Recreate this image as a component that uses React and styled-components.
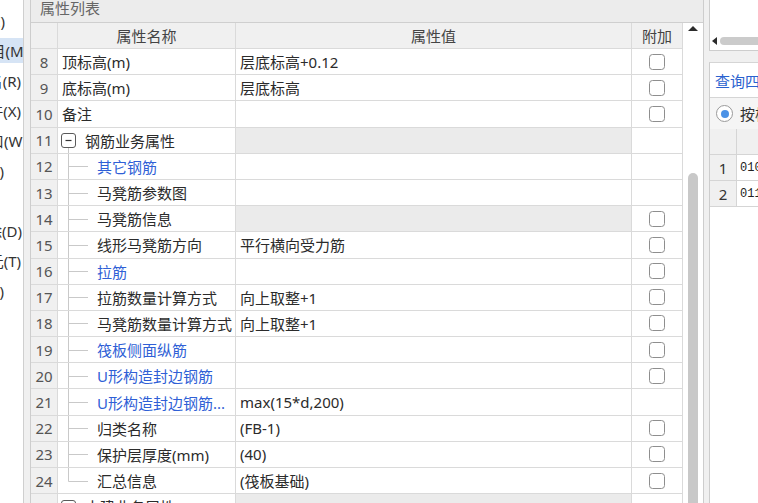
import React from 'react';
import styled, { createGlobalStyle } from 'styled-components';

const Global = createGlobalStyle`
  html, body { margin: 0; padding: 0; }
  body {
    width: 758px; height: 503px; overflow: hidden; background: #f0f0f0;
    font-family: "Noto Sans", "Noto Sans CJK SC", sans-serif;
  }
  #root { height: 503px; }
`;

const Page = styled.div`
  display: flex; width: 758px; height: 503px; overflow: hidden; background: #f0f0f0;
`;

/* ---------- left menu strip ---------- */
const MenuStrip = styled.nav`
  width: 23px; flex: none; background: #fff; border-right: 1px solid #cfcfcf;
  overflow: hidden; display: flex; flex-direction: column; gap: 5px; padding-top: 8px;
`;
const MenuItem = styled.div`
  height: 25px; flex: none; display: flex; align-items: center; justify-content: flex-end;
  background: ${p => (p.$sel ? '#d6e4f5' : 'transparent')};
  white-space: nowrap; font-size: 15px; color: #333;
`;
const MenuText = styled.span`
  margin-right: ${p => p.$end}px;
`;

/* ---------- property panel ---------- */
const Panel = styled.section`
  width: 674px; flex: none; margin-left: 6px; margin-right: 5px; box-sizing: border-box;
  display: flex; flex-direction: column; background: #fff;
  border-left: 1px solid #cdcdcd; border-right: 1px solid #cdcdcd;
`;
const PanelTitle = styled.div`
  height: 23px; flex: none; box-sizing: border-box; background: #ececec;
  border-bottom: 1px solid #cfcfcf; padding-left: 9px;
  font-size: 15px; line-height: 17px; color: #666;
`;
const PanelBody = styled.div`
  flex: 1; min-height: 0; display: flex;
`;
const Grid = styled.div`
  width: 652px; flex: none; display: flex; flex-direction: column; overflow: hidden;
`;
const GridRow = styled.div`
  display: grid; grid-template-columns: 27px 178px 396px 51px;
  height: ${p => p.$h}px; flex: none;
`;
const BaseCell = styled.div`
  box-sizing: border-box; border-right: 1px solid #dadada; border-bottom: 1px solid #dadada;
  display: flex; align-items: center; min-width: 0; overflow: hidden; white-space: nowrap;
  font-size: 15px;
`;
const HeadCell = styled(BaseCell)`
  background: #f0f0f0; color: #444; justify-content: center;
`;
const NumCell = styled(BaseCell)`
  background: #f0f0f0; color: #555; justify-content: center;
`;
const NameCell = styled(BaseCell)`
  background: #fff; color: ${p => (p.$blue ? '#2f5fd6' : '#2b2b2b')};
  padding-left: ${p => p.$pad}px;
`;
const ValueCell = styled(BaseCell)`
  background: ${p => (p.$gray ? '#ebebeb' : '#fff')}; color: #2b2b2b; padding-left: 4px;
`;
const ExtraCell = styled(BaseCell)`
  background: #fff; justify-content: center;
`;
const Check = styled.span`
  width: 16px; height: 16px; box-sizing: border-box; border: 1.5px solid #8e8e8e;
  border-radius: 3.5px; background: #fff;
`;
const GroupLabel = styled.span`
  margin-left: 9px;
`;

const VScroll = styled.div`
  width: 20px; flex: none; display: flex; flex-direction: column; align-items: center; background: #fff;
`;
const ScrollArrow = styled.svg`
  margin-top: 3px; flex: none;
`;
const VThumb = styled.div`
  width: 10px; flex: 1; margin-top: 142px; border-radius: 5px 5px 0 0; background: #c8c8c8;
`;

/* ---------- right side ---------- */
const RightCol = styled.div`
  flex: 1; min-width: 0; display: flex; flex-direction: column; overflow: hidden;
`;
const TopBox = styled.div`
  height: 51px; flex: none; box-sizing: border-box; background: #fff;
  border-left: 1px solid #cdcdcd; border-bottom: 1px solid #cdcdcd;
  display: flex; align-items: flex-end; padding: 0 0 5px 2px;
`;
const HScroll = styled.div`
  display: flex; align-items: center; gap: 3px; height: 8px; width: 300px; flex: none;
`;
const HThumb = styled.div`
  height: 8px; flex: 1; border-radius: 4px; background: #cbcbcb;
`;
const QueryBox = styled.div`
  margin-top: 11px; flex: 1; display: flex; flex-direction: column; background: #fff;
  border-left: 1px solid #cdcdcd; border-top: 1px solid #d5d5d5; width: 300px;
`;
const TabTitle = styled.div`
  height: 35px; flex: none; box-sizing: border-box; border-bottom: 1px solid #d5d5d5;
  display: flex; align-items: center; padding-left: 5px;
  font-size: 15px; color: #2a62cf; white-space: nowrap;
`;
const RadioRow = styled.div`
  height: 31px; flex: none; box-sizing: border-box; background: #f5f5f5;
  display: flex; align-items: center; gap: 7px; padding-left: 6px;
  font-size: 15px; color: #333; white-space: nowrap;
`;
const Radio = styled.span`
  width: 17px; height: 17px; box-sizing: border-box; border-radius: 50%;
  border: 1px solid #9a9a9a; background: #fff; display: flex; align-items: center; justify-content: center;
  &::after { content: ''; width: 8px; height: 8px; border-radius: 50%; background: #4b92e6; }
`;
const QRow = styled.div`
  display: grid; grid-template-columns: 27px 1fr; height: 26px; flex: none;
`;
const QNum = styled.div`
  box-sizing: border-box; background: #f0f0f0; border-right: 1px solid #d5d5d5; border-bottom: 1px solid #d5d5d5;
  display: flex; align-items: center; justify-content: center; font-size: 15px; color: #333;
`;
const QData = styled.div`
  box-sizing: border-box; background: ${p => (p.$head ? '#f0f0f0' : '#fff')};
  border-bottom: 1px solid #d5d5d5; display: flex; align-items: center; padding-left: 3px;
  font-family: "Liberation Mono", monospace; font-size: 12px; color: #222; white-space: nowrap;
`;

/* ---------- drawings ---------- */
const TreeLines = ({ last }) => (
  <svg width="39" height="26" viewBox="0 0 39 26" style={{ flex: 'none' }}>
    <path d={`M10.5 0 V${last ? 13.5 : 26} M10.5 13.5 H30`} stroke="#c9c9c9" strokeWidth="1" fill="none" />
  </svg>
);

const Expander = ({ line }) => (
  <svg width="18" height="26" viewBox="0 0 18 26" style={{ flex: 'none' }}>
    <rect x="3.5" y="6.5" width="14" height="14" rx="2.5" fill="#fff" stroke="#5a5a5a" />
    <path d="M7.5 13.5 H13.5" stroke="#333" strokeWidth="1.2" />
    {line && <path d="M10.5 21 V26" stroke="#c9c9c9" />}
  </svg>
);

const menu = [
  { t: '构件属性(E)', end: 18 },
  { t: '构件列表项目(M)', end: -5, sel: true },
  { t: '重命名(R)', end: 2 },
  { t: '删除构件(X)', end: 2 },
  { t: '新建窗口(W)', end: -4 },
  { t: '层间复制(C)', end: 19 },
  { t: '', end: 0 },
  { t: '批量删除(D)', end: 1 },
  { t: '查找图元(T)', end: 2 },
  { t: '选择同名(Y)', end: 19 },
];

const rows = [
  { n: 8, name: '顶标高(m)', value: '层底标高+0.12', check: true },
  { n: 9, name: '底标高(m)', value: '层底标高', check: true },
  { n: 10, name: '备注', value: '', check: true },
  { n: 11, name: '钢筋业务属性', group: true, open: true, gray: true },
  { n: 12, name: '其它钢筋', child: true, blue: true },
  { n: 13, name: '马凳筋参数图', child: true },
  { n: 14, name: '马凳筋信息', child: true, gray: true, check: true },
  { n: 15, name: '线形马凳筋方向', value: '平行横向受力筋', child: true, check: true },
  { n: 16, name: '拉筋', child: true, blue: true, check: true },
  { n: 17, name: '拉筋数量计算方式', value: '向上取整+1', child: true, check: true },
  { n: 18, name: '马凳筋数量计算方式', value: '向上取整+1', child: true, check: true },
  { n: 19, name: '筏板侧面纵筋', child: true, blue: true, check: true },
  { n: 20, name: 'U形构造封边钢筋', child: true, blue: true, check: true },
  { n: 21, name: 'U形构造封边钢筋...', value: 'max(15*d,200)', child: true, blue: true },
  { n: 22, name: '归类名称', value: '(FB-1)', child: true, check: true },
  { n: 23, name: '保护层厚度(mm)', value: '(40)', child: true, check: true },
  { n: 24, name: '汇总信息', value: '(筏板基础)', child: true, last: true, check: true },
  { n: 25, name: '土建业务属性', group: true, gray: true },
];

export default function App() {
  return (
    <>
      <Global />
      <Page>
        <MenuStrip>
          {menu.map((m, i) => (
            <MenuItem key={i} $sel={m.sel}>
              <MenuText $end={m.end}>{m.t}</MenuText>
            </MenuItem>
          ))}
        </MenuStrip>

        <Panel>
          <PanelTitle>属性列表</PanelTitle>
          <PanelBody>
            <Grid>
              <GridRow $h={26}>
                <HeadCell />
                <HeadCell>属性名称</HeadCell>
                <HeadCell>属性值</HeadCell>
                <HeadCell>附加</HeadCell>
              </GridRow>
              {rows.map(r => (
                <GridRow key={r.n} $h={26.2}>
                  <NumCell>{r.n}</NumCell>
                  <NameCell $blue={r.blue} $pad={r.group || r.child ? 0 : 4}>
                    {r.group && <Expander line={r.open} />}
                    {r.child && <TreeLines last={r.last} />}
                    {r.group ? <GroupLabel>{r.name}</GroupLabel> : r.name}
                  </NameCell>
                  <ValueCell $gray={r.gray}>{r.value}</ValueCell>
                  <ExtraCell>{r.check && <Check />}</ExtraCell>
                </GridRow>
              ))}
            </Grid>
            <VScroll>
              <ScrollArrow width="10" height="5" viewBox="0 0 10 5">
                <path d="M0 5 L5 0 L10 5 Z" fill="#2b2b2b" />
              </ScrollArrow>
              <VThumb />
            </VScroll>
          </PanelBody>
        </Panel>

        <RightCol>
          <TopBox>
            <HScroll>
              <svg width="5" height="8" viewBox="0 0 5 8" style={{ flex: 'none' }}>
                <path d="M5 0 L0 4 L5 8 Z" fill="#2b2b2b" />
              </svg>
              <HThumb />
            </HScroll>
          </TopBox>
          <QueryBox>
            <TabTitle>查询四至构件</TabTitle>
            <RadioRow>
              <Radio />
              按构件查询
            </RadioRow>
            <QRow>
              <QNum />
              <QData $head />
            </QRow>
            <QRow>
              <QNum>1</QNum>
              <QData>0101001</QData>
            </QRow>
            <QRow>
              <QNum>2</QNum>
              <QData>0111002</QData>
            </QRow>
          </QueryBox>
        </RightCol>
      </Page>
    </>
  );
}
